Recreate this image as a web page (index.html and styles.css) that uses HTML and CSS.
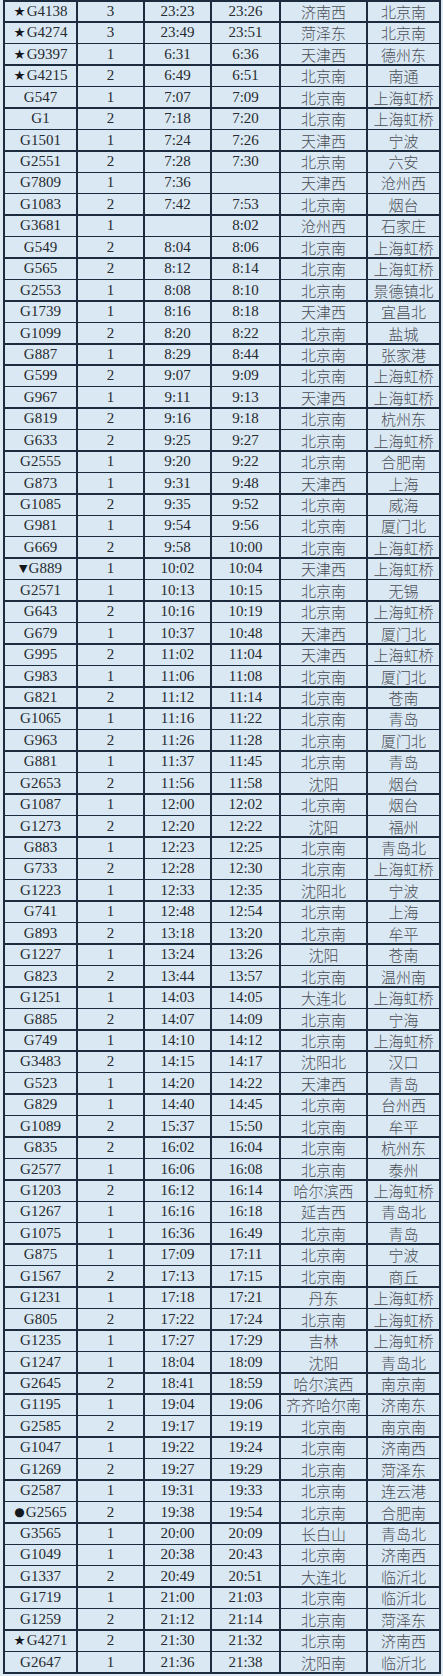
FILE: index.html
```html
<!DOCTYPE html>
<html lang="zh-CN">
<head>
<meta charset="utf-8">
<title>列车时刻表</title>
<link rel="stylesheet" href="styles.css">
</head>
<body>
<div class="table">
<div class="c"><span class="mark star">★</span>G4138</div><div class="c">3</div><div class="c">23:23</div><div class="c">23:26</div><div class="c zh">济南西</div><div class="c zh">北京南</div>
<div class="c"><span class="mark star">★</span>G4274</div><div class="c">3</div><div class="c">23:49</div><div class="c">23:51</div><div class="c zh">菏泽东</div><div class="c zh">北京南</div>
<div class="c"><span class="mark star">★</span>G9397</div><div class="c">1</div><div class="c">6:31</div><div class="c">6:36</div><div class="c zh">天津西</div><div class="c zh">德州东</div>
<div class="c"><span class="mark star">★</span>G4215</div><div class="c">2</div><div class="c">6:49</div><div class="c">6:51</div><div class="c zh">北京南</div><div class="c zh">南通</div>
<div class="c">G547</div><div class="c">1</div><div class="c">7:07</div><div class="c">7:09</div><div class="c zh">北京南</div><div class="c zh">上海虹桥</div>
<div class="c">G1</div><div class="c">2</div><div class="c">7:18</div><div class="c">7:20</div><div class="c zh">北京南</div><div class="c zh">上海虹桥</div>
<div class="c">G1501</div><div class="c">1</div><div class="c">7:24</div><div class="c">7:26</div><div class="c zh">天津西</div><div class="c zh">宁波</div>
<div class="c">G2551</div><div class="c">2</div><div class="c">7:28</div><div class="c">7:30</div><div class="c zh">北京南</div><div class="c zh">六安</div>
<div class="c">G7809</div><div class="c">1</div><div class="c">7:36</div><div class="c"></div><div class="c zh">天津西</div><div class="c zh">沧州西</div>
<div class="c">G1083</div><div class="c">2</div><div class="c">7:42</div><div class="c">7:53</div><div class="c zh">北京南</div><div class="c zh">烟台</div>
<div class="c">G3681</div><div class="c">1</div><div class="c"></div><div class="c">8:02</div><div class="c zh">沧州西</div><div class="c zh">石家庄</div>
<div class="c">G549</div><div class="c">2</div><div class="c">8:04</div><div class="c">8:06</div><div class="c zh">北京南</div><div class="c zh">上海虹桥</div>
<div class="c">G565</div><div class="c">2</div><div class="c">8:12</div><div class="c">8:14</div><div class="c zh">北京南</div><div class="c zh">上海虹桥</div>
<div class="c">G2553</div><div class="c">1</div><div class="c">8:08</div><div class="c">8:10</div><div class="c zh">北京南</div><div class="c zh">景德镇北</div>
<div class="c">G1739</div><div class="c">1</div><div class="c">8:16</div><div class="c">8:18</div><div class="c zh">天津西</div><div class="c zh">宜昌北</div>
<div class="c">G1099</div><div class="c">2</div><div class="c">8:20</div><div class="c">8:22</div><div class="c zh">北京南</div><div class="c zh">盐城</div>
<div class="c">G887</div><div class="c">1</div><div class="c">8:29</div><div class="c">8:44</div><div class="c zh">北京南</div><div class="c zh">张家港</div>
<div class="c">G599</div><div class="c">2</div><div class="c">9:07</div><div class="c">9:09</div><div class="c zh">北京南</div><div class="c zh">上海虹桥</div>
<div class="c">G967</div><div class="c">1</div><div class="c">9:11</div><div class="c">9:13</div><div class="c zh">天津西</div><div class="c zh">上海虹桥</div>
<div class="c">G819</div><div class="c">2</div><div class="c">9:16</div><div class="c">9:18</div><div class="c zh">北京南</div><div class="c zh">杭州东</div>
<div class="c">G633</div><div class="c">2</div><div class="c">9:25</div><div class="c">9:27</div><div class="c zh">北京南</div><div class="c zh">上海虹桥</div>
<div class="c">G2555</div><div class="c">1</div><div class="c">9:20</div><div class="c">9:22</div><div class="c zh">北京南</div><div class="c zh">合肥南</div>
<div class="c">G873</div><div class="c">1</div><div class="c">9:31</div><div class="c">9:48</div><div class="c zh">天津西</div><div class="c zh">上海</div>
<div class="c">G1085</div><div class="c">2</div><div class="c">9:35</div><div class="c">9:52</div><div class="c zh">北京南</div><div class="c zh">威海</div>
<div class="c">G981</div><div class="c">1</div><div class="c">9:54</div><div class="c">9:56</div><div class="c zh">北京南</div><div class="c zh">厦门北</div>
<div class="c">G669</div><div class="c">2</div><div class="c">9:58</div><div class="c">10:00</div><div class="c zh">北京南</div><div class="c zh">上海虹桥</div>
<div class="c"><span class="mark tri">▼</span>G889</div><div class="c">1</div><div class="c">10:02</div><div class="c">10:04</div><div class="c zh">天津西</div><div class="c zh">上海虹桥</div>
<div class="c">G2571</div><div class="c">1</div><div class="c">10:13</div><div class="c">10:15</div><div class="c zh">北京南</div><div class="c zh">无锡</div>
<div class="c">G643</div><div class="c">2</div><div class="c">10:16</div><div class="c">10:19</div><div class="c zh">北京南</div><div class="c zh">上海虹桥</div>
<div class="c">G679</div><div class="c">1</div><div class="c">10:37</div><div class="c">10:48</div><div class="c zh">天津西</div><div class="c zh">厦门北</div>
<div class="c">G995</div><div class="c">2</div><div class="c">11:02</div><div class="c">11:04</div><div class="c zh">天津西</div><div class="c zh">上海虹桥</div>
<div class="c">G983</div><div class="c">1</div><div class="c">11:06</div><div class="c">11:08</div><div class="c zh">北京南</div><div class="c zh">厦门北</div>
<div class="c">G821</div><div class="c">2</div><div class="c">11:12</div><div class="c">11:14</div><div class="c zh">北京南</div><div class="c zh">苍南</div>
<div class="c">G1065</div><div class="c">1</div><div class="c">11:16</div><div class="c">11:22</div><div class="c zh">北京南</div><div class="c zh">青岛</div>
<div class="c">G963</div><div class="c">2</div><div class="c">11:26</div><div class="c">11:28</div><div class="c zh">北京南</div><div class="c zh">厦门北</div>
<div class="c">G881</div><div class="c">1</div><div class="c">11:37</div><div class="c">11:45</div><div class="c zh">北京南</div><div class="c zh">青岛</div>
<div class="c">G2653</div><div class="c">2</div><div class="c">11:56</div><div class="c">11:58</div><div class="c zh">沈阳</div><div class="c zh">烟台</div>
<div class="c">G1087</div><div class="c">1</div><div class="c">12:00</div><div class="c">12:02</div><div class="c zh">北京南</div><div class="c zh">烟台</div>
<div class="c">G1273</div><div class="c">2</div><div class="c">12:20</div><div class="c">12:22</div><div class="c zh">沈阳</div><div class="c zh">福州</div>
<div class="c">G883</div><div class="c">1</div><div class="c">12:23</div><div class="c">12:25</div><div class="c zh">北京南</div><div class="c zh">青岛北</div>
<div class="c">G733</div><div class="c">2</div><div class="c">12:28</div><div class="c">12:30</div><div class="c zh">北京南</div><div class="c zh">上海虹桥</div>
<div class="c">G1223</div><div class="c">1</div><div class="c">12:33</div><div class="c">12:35</div><div class="c zh">沈阳北</div><div class="c zh">宁波</div>
<div class="c">G741</div><div class="c">1</div><div class="c">12:48</div><div class="c">12:54</div><div class="c zh">北京南</div><div class="c zh">上海</div>
<div class="c">G893</div><div class="c">2</div><div class="c">13:18</div><div class="c">13:20</div><div class="c zh">北京南</div><div class="c zh">牟平</div>
<div class="c">G1227</div><div class="c">1</div><div class="c">13:24</div><div class="c">13:26</div><div class="c zh">沈阳</div><div class="c zh">苍南</div>
<div class="c">G823</div><div class="c">2</div><div class="c">13:44</div><div class="c">13:57</div><div class="c zh">北京南</div><div class="c zh">温州南</div>
<div class="c">G1251</div><div class="c">1</div><div class="c">14:03</div><div class="c">14:05</div><div class="c zh">大连北</div><div class="c zh">上海虹桥</div>
<div class="c">G885</div><div class="c">2</div><div class="c">14:07</div><div class="c">14:09</div><div class="c zh">北京南</div><div class="c zh">宁海</div>
<div class="c">G749</div><div class="c">1</div><div class="c">14:10</div><div class="c">14:12</div><div class="c zh">北京南</div><div class="c zh">上海虹桥</div>
<div class="c">G3483</div><div class="c">2</div><div class="c">14:15</div><div class="c">14:17</div><div class="c zh">沈阳北</div><div class="c zh">汉口</div>
<div class="c">G523</div><div class="c">1</div><div class="c">14:20</div><div class="c">14:22</div><div class="c zh">天津西</div><div class="c zh">青岛</div>
<div class="c">G829</div><div class="c">1</div><div class="c">14:40</div><div class="c">14:45</div><div class="c zh">北京南</div><div class="c zh">台州西</div>
<div class="c">G1089</div><div class="c">2</div><div class="c">15:37</div><div class="c">15:50</div><div class="c zh">北京南</div><div class="c zh">牟平</div>
<div class="c">G835</div><div class="c">2</div><div class="c">16:02</div><div class="c">16:04</div><div class="c zh">北京南</div><div class="c zh">杭州东</div>
<div class="c">G2577</div><div class="c">1</div><div class="c">16:06</div><div class="c">16:08</div><div class="c zh">北京南</div><div class="c zh">泰州</div>
<div class="c">G1203</div><div class="c">2</div><div class="c">16:12</div><div class="c">16:14</div><div class="c zh">哈尔滨西</div><div class="c zh">上海虹桥</div>
<div class="c">G1267</div><div class="c">1</div><div class="c">16:16</div><div class="c">16:18</div><div class="c zh">延吉西</div><div class="c zh">青岛北</div>
<div class="c">G1075</div><div class="c">1</div><div class="c">16:36</div><div class="c">16:49</div><div class="c zh">北京南</div><div class="c zh">青岛</div>
<div class="c">G875</div><div class="c">1</div><div class="c">17:09</div><div class="c">17:11</div><div class="c zh">北京南</div><div class="c zh">宁波</div>
<div class="c">G1567</div><div class="c">2</div><div class="c">17:13</div><div class="c">17:15</div><div class="c zh">北京南</div><div class="c zh">商丘</div>
<div class="c">G1231</div><div class="c">1</div><div class="c">17:18</div><div class="c">17:21</div><div class="c zh">丹东</div><div class="c zh">上海虹桥</div>
<div class="c">G805</div><div class="c">2</div><div class="c">17:22</div><div class="c">17:24</div><div class="c zh">北京南</div><div class="c zh">上海虹桥</div>
<div class="c">G1235</div><div class="c">1</div><div class="c">17:27</div><div class="c">17:29</div><div class="c zh">吉林</div><div class="c zh">上海虹桥</div>
<div class="c">G1247</div><div class="c">1</div><div class="c">18:04</div><div class="c">18:09</div><div class="c zh">沈阳</div><div class="c zh">青岛北</div>
<div class="c">G2645</div><div class="c">2</div><div class="c">18:41</div><div class="c">18:59</div><div class="c zh">哈尔滨西</div><div class="c zh">南京南</div>
<div class="c">G1195</div><div class="c">1</div><div class="c">19:04</div><div class="c">19:06</div><div class="c zh">齐齐哈尔南</div><div class="c zh">济南东</div>
<div class="c">G2585</div><div class="c">2</div><div class="c">19:17</div><div class="c">19:19</div><div class="c zh">北京南</div><div class="c zh">南京南</div>
<div class="c">G1047</div><div class="c">1</div><div class="c">19:22</div><div class="c">19:24</div><div class="c zh">北京南</div><div class="c zh">济南西</div>
<div class="c">G1269</div><div class="c">2</div><div class="c">19:27</div><div class="c">19:29</div><div class="c zh">北京南</div><div class="c zh">菏泽东</div>
<div class="c">G2587</div><div class="c">1</div><div class="c">19:31</div><div class="c">19:33</div><div class="c zh">北京南</div><div class="c zh">连云港</div>
<div class="c"><span class="mark dot">●</span>G2565</div><div class="c">2</div><div class="c">19:38</div><div class="c">19:54</div><div class="c zh">北京南</div><div class="c zh">合肥南</div>
<div class="c">G3565</div><div class="c">1</div><div class="c">20:00</div><div class="c">20:09</div><div class="c zh">长白山</div><div class="c zh">青岛北</div>
<div class="c">G1049</div><div class="c">1</div><div class="c">20:38</div><div class="c">20:43</div><div class="c zh">北京南</div><div class="c zh">济南西</div>
<div class="c">G1337</div><div class="c">2</div><div class="c">20:49</div><div class="c">20:51</div><div class="c zh">大连北</div><div class="c zh">临沂北</div>
<div class="c">G1719</div><div class="c">1</div><div class="c">21:00</div><div class="c">21:03</div><div class="c zh">北京南</div><div class="c zh">临沂北</div>
<div class="c">G1259</div><div class="c">2</div><div class="c">21:12</div><div class="c">21:14</div><div class="c zh">北京南</div><div class="c zh">菏泽东</div>
<div class="c"><span class="mark star">★</span>G4271</div><div class="c">2</div><div class="c">21:30</div><div class="c">21:32</div><div class="c zh">北京南</div><div class="c zh">济南西</div>
<div class="c">G2647</div><div class="c">1</div><div class="c">21:36</div><div class="c">21:38</div><div class="c zh">沈阳南</div><div class="c zh">临沂北</div>
</div>
</body>
</html>
```

FILE: styles.css
```css
html, body {
  margin: 0;
  padding: 0;
  background: #dfeaf3;
}

body {
  padding: 0 2px 0 3px;
}

.table {
  display: grid;
  grid-template-columns: 71px 65px 65px 67px 85px 71px;
  grid-auto-rows: 19.95px;
  gap: 1.5px 2px;
  padding: 1.5px 2px;
  width: max-content;
  background: #1c2c3e;
}

.c {
  background: #dae8f3;
  display: flex;
  align-items: center;
  justify-content: center;
  font-family: "Liberation Serif", "DejaVu Serif", serif;
  font-size: 15px;
  color: #262a30;
  white-space: nowrap;
  line-height: 1;
}

.zh {
  font-family: "Noto Sans CJK SC", "Noto Sans", sans-serif;
  font-weight: 300;
  font-size: 15px;
  color: #4a4e55;
}

.mark {
  font-family: "DejaVu Sans", sans-serif;
  color: #15181c;
  margin-right: 1px;
}

.star {
  font-size: 13.5px;
}

.tri {
  font-size: 11px;
}

.dot {
  font-size: 12px;
}
```
